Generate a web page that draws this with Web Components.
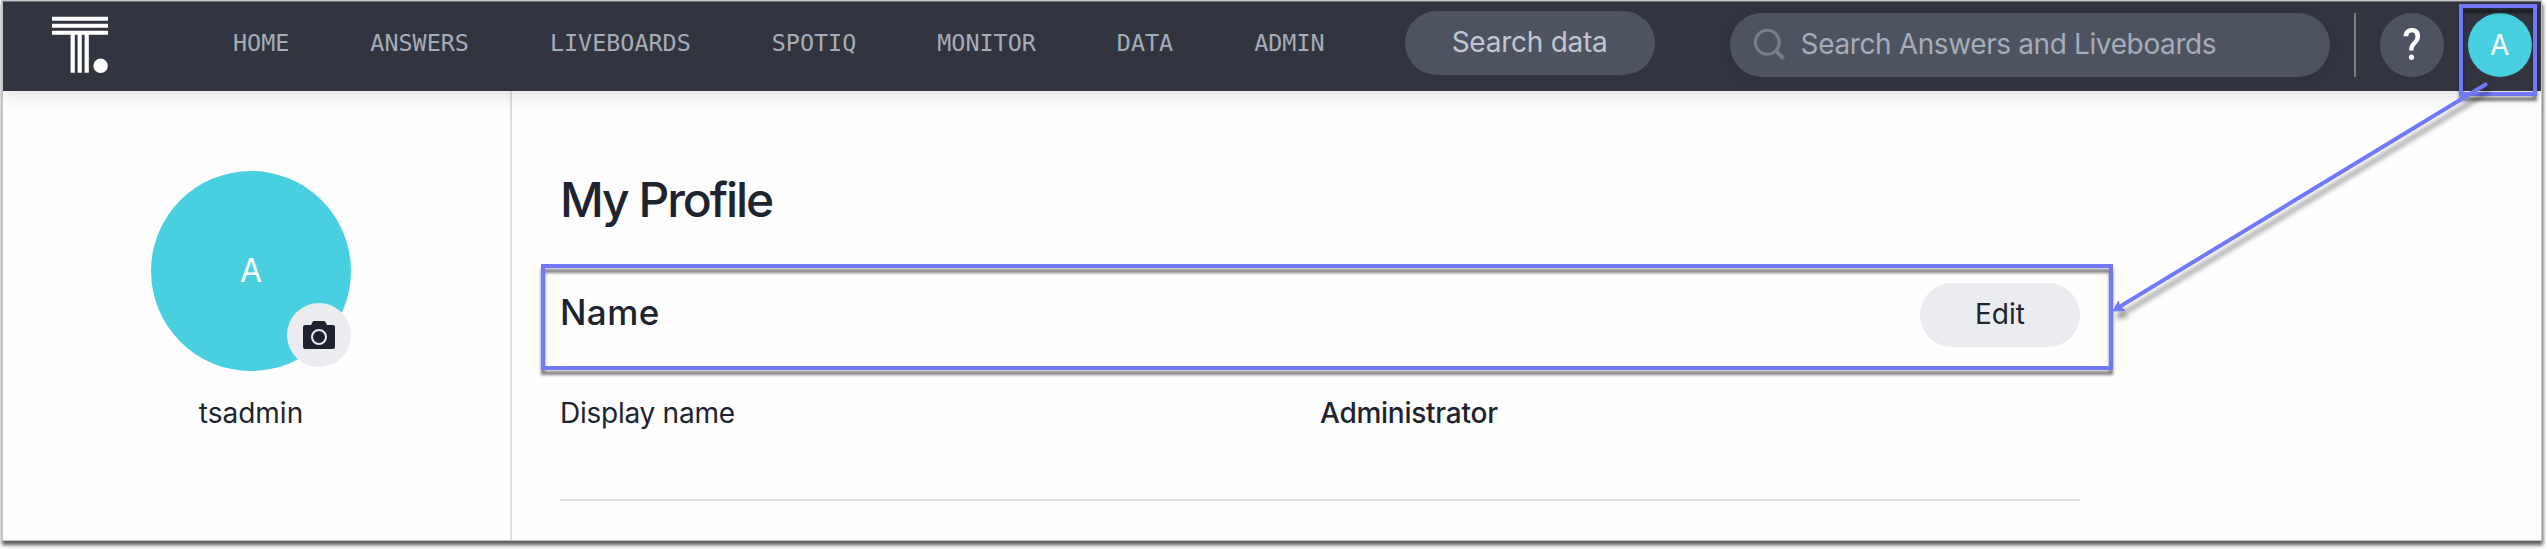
<!DOCTYPE html>
<html lang="en">
<head>
<meta charset="utf-8">
<title>My Profile</title>
<style>
html,body{margin:0;background:#fff}
body{width:2548px;height:549px;overflow:hidden;position:relative;font-family:Inter,"Liberation Sans",sans-serif;font-size:28px;color:#1d232f}
</style>
</head>
<body>
<app-window>
  <top-bar slot="header"></top-bar>
  <user-card slot="side" name="tsadmin" initial="A"></user-card>
  <profile-panel></profile-panel>
</app-window>
<callout-layer></callout-layer>
<script>
function define(name, html) {
  const t = document.createElement('template');
  t.innerHTML = html;
  customElements.define(name, class extends HTMLElement {
    constructor() {
      super();
      this.attachShadow({mode: 'open'}).appendChild(t.content.cloneNode(true));
    }
    connectedCallback() {
      this.shadowRoot.querySelectorAll('[data-attr]').forEach(el => {
        el.textContent = this.getAttribute(el.dataset.attr) || '';
      });
    }
  });
}

define('app-window', `
<style>
:host{display:flex;flex-direction:column;box-sizing:border-box;width:2541px;height:541px;margin-left:1px;
 border:solid #c4c5c5;border-width:1px 1px 1px 2px;background:#fefefe;box-shadow:1px 4px 4px rgba(0,0,0,.66)}
.body{display:flex;flex:1;min-height:0}
aside{box-sizing:border-box;width:509px;border-right:2px solid #dadee6}
main{flex:1}
</style>
<slot name="header"></slot>
<div class="body"><aside><slot name="side"></slot></aside><main><slot></slot></main></div>`);

define('nav-item', `
<style>:host{display:block;font:23.4px/30px "DejaVu Sans Mono",monospace;color:#a5acb9;white-space:nowrap}</style><slot></slot>`);

define('user-avatar', `
<style>:host{display:flex;align-items:center;justify-content:center;width:var(--size,64px);height:var(--size,64px);border-radius:50%;background:#48d0e0;color:#fff;font-size:var(--text,28px);line-height:1}</style>
<span><slot></slot></span>`);

define('pill-button', `
<style>:host{display:flex;align-items:center;justify-content:center;height:64px;border-radius:32px;white-space:nowrap;line-height:34px}span{position:relative;top:-1px}</style>
<span><slot></slot></span>`);

define('search-box', `
<style>:host{display:flex;align-items:center;box-sizing:border-box;width:600px;height:64px;border-radius:32px;background:#4e5361;color:#a5acb9;padding-left:22px;box-shadow:0 2px 8px rgba(40,42,60,.3)}
svg{display:block;margin-right:15px}span{white-space:nowrap;line-height:34px;letter-spacing:var(--ls);margin-bottom:2px}</style>
<svg width="34" height="34" viewBox="0 0 34 34" fill="none" stroke="#777e8c" stroke-width="3"><circle cx="15.3" cy="14.3" r="12"/><path d="M23.8 22.8l7.7 7.7" stroke-width="4"/></svg>
<span><slot></slot></span>`);

define('top-bar', `
<style>
:host{display:flex;align-items:flex-start;box-sizing:border-box;height:90px;flex:none;background:#323540;border-top:1px solid #6f7274;box-shadow:0 4px 18px rgba(0,0,0,.13);clip-path:inset(0 0 -30px 0);position:relative}
.logo{display:block;margin:14px 0 0 49px}
nav{display:flex;gap:81px;margin:26px 0 0 123px}
.data{width:250px;margin:9px 0 0 80px;background:#4e5361;color:#c1c6d0;letter-spacing:-.25px;flex:none}
search-box{margin:11px 0 0 75px;--ls:-.38px;flex:none}
i{width:2px;height:64px;margin:11px 24px 0;background:#7b7e7e}
.help{width:64px;height:64px;border-radius:50%;background:#4e5361;color:#fff;display:flex;align-items:center;justify-content:center;font:500 45px/64px Roboto,sans-serif;margin-top:11px}
.help span{transform:scaleX(.87)}
user-avatar{margin:11px 0 0 24px}
</style>
<svg class="logo" width="58" height="60" viewBox="0 0 58 60" fill="#fff"><path d="M0 .7h56v4H0zM0 7.7h56v4H0zM0 14.7h56v4H0zM18.6 18h4.2v38.7h-4.2zM25.6 18h4.2v38.7h-4.2zM32.6 18h4.2v38.7h-4.2z"/><circle cx="48.6" cy="49.8" r="7.2"/></svg>
<nav><nav-item>HOME</nav-item><nav-item>ANSWERS</nav-item><nav-item>LIVEBOARDS</nav-item><nav-item>SPOTIQ</nav-item><nav-item>MONITOR</nav-item><nav-item>DATA</nav-item><nav-item>ADMIN</nav-item></nav>
<pill-button class="data">Search data</pill-button>
<search-box>Search Answers and Liveboards</search-box>
<i></i>
<div class="help"><span>?</span></div>
<user-avatar>A</user-avatar>`);

define('user-card', `
<style>
:host{display:flex;flex-direction:column;align-items:center;width:200px;margin:80px 0 0 148px}
.pic{position:relative}
user-avatar{--size:200px;--text:32px}
.badge{position:absolute;right:0;bottom:4px;width:64px;height:64px;border-radius:50%;background:#ebecf0;display:flex;align-items:center;justify-content:center}
.name{margin-top:25px;line-height:34px}
</style>
<div class="pic"><user-avatar><span data-attr="initial"></span></user-avatar>
<div class="badge"><svg width="32" height="28" viewBox="0 0 32 28"><path fill="#1d232f" d="M2 4h6l1.6-3Q10 0 11 0h10q1 0 1.4 1L24 4h6q2 0 2 2v20q0 2-2 2H2q-2 0-2-2V6q0-2 2-2z"/><circle cx="16" cy="16" r="7" fill="none" stroke="#ebecf0" stroke-width="2"/></svg></div></div>
<div class="name" data-attr="name"></div>`);

define('profile-panel', `
<style>
:host{display:block;width:1520px;margin:79px 0 0 48px}
h1{font-size:48px;font-weight:500;line-height:60px;margin:0;letter-spacing:-2.05px}
.head{display:flex;justify-content:space-between;align-items:flex-start;height:64px;margin-top:53px}
h2{font-size:35px;font-weight:500;line-height:42px;margin:8px 0 0;letter-spacing:.4px}
pill-button{width:160px;background:#ebecf0}
.row{display:grid;grid-template-columns:1fr 1fr;margin-top:49px;line-height:34px;letter-spacing:-.25px}
b{font-weight:500}
hr{border:0;height:2px;background:#dadee6;margin:69px 0 0}
</style>
<h1>My Profile</h1>
<div class="head"><h2>Name</h2><pill-button>Edit</pill-button></div>
<div class="row"><span>Display name</span><b>Administrator</b></div>
<hr>`);

define('callout-layer', `
<style>:host{position:absolute;inset:0;pointer-events:none}svg{display:block}
.s{filter:drop-shadow(0 5px 1.5px rgba(0,0,0,.5))}.a{filter:drop-shadow(3px 7px 2.5px rgba(0,0,0,.4))}</style>
<svg width="2548" height="549" fill="none" stroke="#7179fa" stroke-width="4">
<g class="s"><path d="M543 266h1568v102H543z"/><path d="M2461 6h74v88h-74z"/></g>
<g class="a"><path d="M2485.500 84.500L2120 306.500" stroke-linecap="round"/><path d="M2113 311l5.500-10 1 5.500 5.500 4z" fill="#7179fa" stroke-width="1"/></g>
</svg>`);
</script>
</body>
</html>
